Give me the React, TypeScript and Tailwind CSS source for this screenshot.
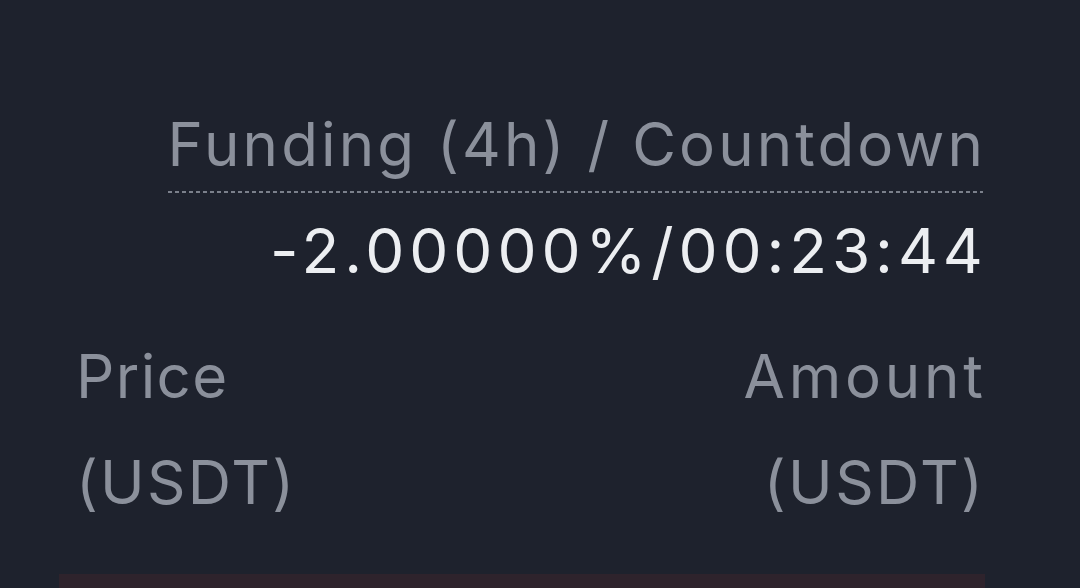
import React from "react";

export default function App() {
  return (
    <div className="w-[1080px] h-[588px] overflow-hidden bg-[#1e222d] font-['Inter',sans-serif]">
      <div className="flex flex-col items-end pr-[97px] pt-[113px]">
        <div className="inline-flex flex-col">
          <span className="mr-[-3px] text-[60px] leading-[62px] tracking-[3.1px] text-[#8b909b]">Funding (4h) / Countdown</span>
          <div className="mt-[16px] h-[2px] w-full bg-[repeating-linear-gradient(to_right,#7b808b_0_4px,transparent_4px_7px)]" />
        </div>
        <span className="mr-[-4.8px] mt-[27px] text-[62px] leading-[62px] tracking-[4.9px] text-[#eceef1]">-2.00000%/00:23:44</span>
      </div>
      <div className="mt-[43px] flex justify-between pl-[76px] pr-[97px] text-[60px] leading-[102px] text-[#8b909b]">
        <div className="flex flex-col">
          <span className="tracking-[1.4px]">Price</span>
          <span className="mt-[4px] tracking-[2.2px]">(USDT)</span>
        </div>
        <div className="flex flex-col items-end">
          <span className="mr-[-3.8px] tracking-[3.8px]">Amount</span>
          <span className="mr-[-2.4px] mt-[4px] tracking-[2.4px]">(USDT)</span>
        </div>
      </div>
      <div className="ml-[59px] mt-[41px] h-[40px] w-[926px] bg-[#2e232c]" />
    </div>
  );
}
